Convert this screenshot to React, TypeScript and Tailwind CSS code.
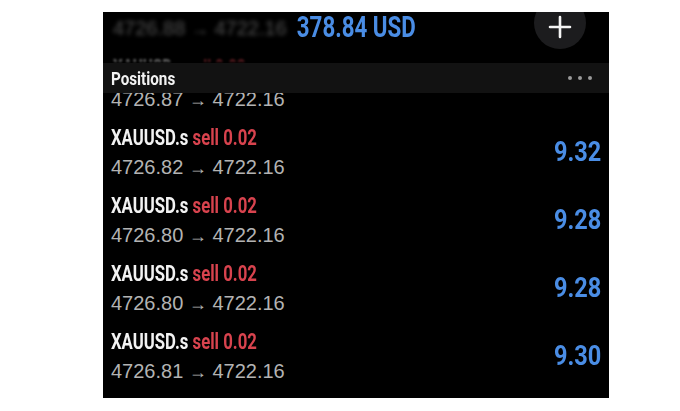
import React from "react";

const rows = [
  { open: "4726.82", profit: "9.32" },
  { open: "4726.80", profit: "9.28" },
  { open: "4726.80", profit: "9.28" },
  { open: "4726.81", profit: "9.30" },
];

const cond = { fontFamily: 'Roboto, "Liberation Sans", sans-serif' };
const reg = { fontFamily: '"Liberation Sans", Arial, sans-serif' };

function PriceLine({ from }: { from: string }) {
  return (
    <div className="h-[26px] leading-[26px] text-[20px] text-[#b3b3b3] whitespace-nowrap" style={reg}>
      {from} <span className="text-[18px]">→</span> 4722.16
    </div>
  );
}

export default function App() {
  return (
    <div className="w-[680px] h-[411px] bg-white pt-[12px] pl-[103px] overflow-hidden">
      <div className="w-[506px] h-[386px] bg-black overflow-hidden flex flex-col">
        {/* header */}
        <div className="h-[51px] shrink-0 grid grid-cols-[minmax(0,1fr)_auto_minmax(0,1fr)]">
          <div className="pl-[10px] pt-[3px] flex flex-col overflow-hidden">
            <div className="blur-[2px] opacity-45">
              <PriceLine from="4726.88" />
            </div>
            <div className="mt-[16px] h-[5px] overflow-hidden blur-[1px] opacity-40">
              <div className="text-[20px] leading-[20px] font-bold text-[#f2f2f2] whitespace-nowrap [transform:scaleX(0.76)] origin-left" style={cond}>
                XAUUSD.s <span className="text-[#d8434e]">sell 0.02</span>
              </div>
            </div>
          </div>
          <div className="w-[120px] flex justify-center pt-[1px]">
            <div
              className="text-[29px] leading-[29px] font-bold text-[#4a8de5] whitespace-nowrap [transform:scaleX(0.77)] origin-center"
              style={cond}
            >
              378.84 USD
            </div>
          </div>
          <div className="flex justify-end pr-[23px]">
            <div className="w-[52px] h-[52px] -mt-[15px] rounded-full bg-[#1c1c1e] flex items-center justify-center">
              <svg width="24" height="24" viewBox="0 0 24 24" className="mt-[7px]">
                <path d="M12 2v20M2 12h20" stroke="#f5f5f5" strokeWidth="2.6" strokeLinecap="round" />
              </svg>
            </div>
          </div>
        </div>
        {/* positions bar */}
        <div className="h-[30px] shrink-0 bg-[#121212] flex items-center justify-between pl-[8px] pr-[17px]">
          <div className="text-[19px] font-bold text-[#f2f2f2] [transform:scaleX(0.8)] origin-left leading-none" style={cond}>
            Positions
          </div>
          <div className="flex gap-[6px]">
            <div className="w-[4px] h-[4px] rounded-full bg-[#9a9a9a]" />
            <div className="w-[4px] h-[4px] rounded-full bg-[#9a9a9a]" />
            <div className="w-[4px] h-[4px] rounded-full bg-[#9a9a9a]" />
          </div>
        </div>
        {/* partially hidden row */}
        <div className="h-[19px] shrink-0 overflow-hidden flex items-end pl-[8px]">
          <PriceLine from="4726.87" />
        </div>
        {rows.map((r, i) => (
          <div key={i} className="h-[68px] shrink-0 pt-[14px] pl-[8px] pr-[8px] flex items-start justify-between">
            <div className="flex flex-col">
              <div
                className="h-[24px] leading-[24px] text-[22px] font-bold whitespace-nowrap [transform:scaleX(0.76)] origin-left"
                style={cond}
              >
                <span className="text-[#f2f2f2]">XAUUSD.s</span>{" "}
                <span className="text-[#d8434e]">sell 0.02</span>
              </div>
              <div className="mt-[4px]">
                <PriceLine from={r.open} />
              </div>
            </div>
            <div
              className="mt-[12px] text-[28px] font-bold text-[#4a8de5] [transform:scaleX(0.84)] origin-right leading-none"
              style={cond}
            >
              {r.profit}
            </div>
          </div>
        ))}
      </div>
    </div>
  );
}
